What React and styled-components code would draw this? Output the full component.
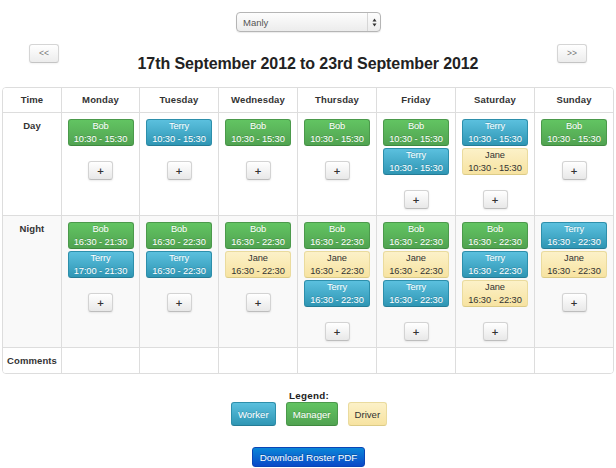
import React from "react";
import styled, { createGlobalStyle, css } from "styled-components";

const Global = createGlobalStyle`
  html, body { margin: 0; padding: 0; background: #fff; }
  body { font-family: "Liberation Sans", Arial, Helvetica, sans-serif; color: #333; }
  * { box-sizing: border-box; }
`;

const Page = styled.div`
  width: 616px;
  padding: 12px 2px 0;
`;

const SelectRow = styled.div`
  display: flex;
  justify-content: center;
`;

const Select = styled.div`
  width: 145px;
  height: 20px;
  margin-left: 1px;
  border: 1px solid #b5b5b5;
  border-radius: 4px;
  background: linear-gradient(#fdfdfd, #ececec);
  box-shadow: 0 1px 1px rgba(0, 0, 0, 0.08);
  display: flex;
  align-items: center;
  font-size: 9.5px;
  color: #555;
`;

const SelectText = styled.span`
  flex: 1;
  padding-left: 6px;
`;

const SelectArrow = styled.span`
  width: 13px;
  height: 100%;
  border-left: 1px solid #d6d6d6;
  display: flex;
  align-items: center;
  justify-content: center;
`;

const NavRow = styled.div`
  display: flex;
  align-items: flex-start;
  margin-top: 12px;
  padding: 0 27px;
`;

const NavButton = styled.button`
  width: 30px;
  height: 19px;
  padding: 0;
  border: 1px solid #d5d5d5;
  border-bottom-color: #c4c4c4;
  border-radius: 3px;
  background: linear-gradient(#ffffff, #ececec);
  box-shadow: inset 0 1px 0 rgba(255, 255, 255, 0.3), 0 1px 2px rgba(0, 0, 0, 0.05);
  font-family: inherit;
  font-size: 8.5px;
  color: #777;
  line-height: 17px;
`;

const Title = styled.h3`
  flex: 1;
  margin: 10px 0 0;
  text-align: center;
  font-size: 16px;
  line-height: 20px;
  font-weight: bold;
  color: #222;
  letter-spacing: -0.1px;
`;

const Grid = styled.div`
  margin-top: 13px;
  display: grid;
  grid-template-columns: 58px 78px 79px 79px 79px 79px 79px 79px;
  border: 1px solid #dddddd;
  border-radius: 4px;
  overflow: hidden;
`;

const Cell = styled.div`
  border-left: ${(p) => (p.$first ? "0" : "1px solid #dddddd")};
  border-top: ${(p) => (p.$top ? "0" : "1px solid #dddddd")};
  background: ${(p) => (p.$shade ? "#f9f9f9" : "#fff")};
  padding: ${(p) => (p.$head ? "5px 2px 6px" : "6px 2px 6px")};
  display: flex;
  flex-direction: column;
  align-items: center;
  font-size: 9px;
  line-height: 13px;
`;

const HeadText = styled.span`
  font-weight: bold;
  font-size: 9.5px;
  letter-spacing: 0.15px;
  color: #333;
`;

const LabelText = styled.span`
  font-weight: bold;
  font-size: 9.5px;
  letter-spacing: 0.1px;
  color: #333;
`;

const colors = {
  manager: css`
    background: linear-gradient(#62c462, #51a351);
    border-color: #4b994b #4b994b #3f8a3f;
    color: #fff;
    text-shadow: 0 -1px 0 rgba(0, 0, 0, 0.15);
  `,
  worker: css`
    background: linear-gradient(#5bc0de, #2f96b4);
    border-color: #2d8fab #2d8fab #257c96;
    color: #fff;
    text-shadow: 0 -1px 0 rgba(0, 0, 0, 0.15);
  `,
  driver: css`
    background: linear-gradient(#fcf1c8, #f7e3a1);
    border-color: #eadb9e #eadb9e #dccb86;
    color: #333;
  `,
};

const Shift = styled.div`
  width: 66px;
  height: 27px;
  border: 1px solid;
  border-radius: 3px;
  display: flex;
  flex-direction: column;
  align-items: center;
  justify-content: center;
  font-size: 9.3px;
  letter-spacing: -0.1px;
  line-height: 12.5px;
  & + & { margin-top: 2px; }
  ${(p) => colors[p.$kind]}
`;

const AddButton = styled.button`
  margin-top: 15px;
  width: 25px;
  height: 19px;
  padding: 0;
  border: 1px solid #d3d3d3;
  border-bottom-color: #bdbdbd;
  border-radius: 3px;
  background: linear-gradient(#ffffff, #e8e8e8);
  box-shadow: 0 1px 2px rgba(0, 0, 0, 0.08);
  font-family: "DejaVu Sans", sans-serif;
  font-size: 9px;
  font-weight: bold;
  color: #333;
  line-height: 16px;
`;

const LegendBox = styled.div`
  margin-top: 15px;
  display: flex;
  flex-direction: column;
  align-items: center;
`;

const LegendTitle = styled.div`
  font-weight: bold;
  font-size: 9.8px;
  line-height: 13px;
  color: #222;
  letter-spacing: 0.3px;
  padding-left: 2px;
`;

const LegendRow = styled.div`
  display: flex;
  gap: 10px;
  margin-left: 2px;
`;

const LegendItem = styled.div`
  height: 24px;
  padding: 0 6px;
  border: 1px solid;
  border-radius: 3px;
  display: flex;
  align-items: center;
  font-size: 9.6px;
  ${(p) => colors[p.$kind]}
`;

const Download = styled.button`
  margin-top: 21px;
  width: 113px;
  height: 20px;
  padding: 0;
  margin-left: 1px;
  border: 1px solid #0a45b5;
  border-radius: 3px;
  background: linear-gradient(#0a86d8, #0a49c8);
  color: #fff;
  font-family: inherit;
  font-size: 9.8px;
  text-shadow: 0 -1px 0 rgba(0, 0, 0, 0.25);
`;

const days = ["Monday", "Tuesday", "Wednesday", "Thursday", "Friday", "Saturday", "Sunday"];

const dayShifts = [
  [["manager", "Bob", "10:30 - 15:30"]],
  [["worker", "Terry", "10:30 - 15:30"]],
  [["manager", "Bob", "10:30 - 15:30"]],
  [["manager", "Bob", "10:30 - 15:30"]],
  [["manager", "Bob", "10:30 - 15:30"], ["worker", "Terry", "10:30 - 15:30"]],
  [["worker", "Terry", "10:30 - 15:30"], ["driver", "Jane", "10:30 - 15:30"]],
  [["manager", "Bob", "10:30 - 15:30"]],
];

const nightShifts = [
  [["manager", "Bob", "16:30 - 21:30"], ["worker", "Terry", "17:00 - 21:30"]],
  [["manager", "Bob", "16:30 - 22:30"], ["worker", "Terry", "16:30 - 22:30"]],
  [["manager", "Bob", "16:30 - 22:30"], ["driver", "Jane", "16:30 - 22:30"]],
  [["manager", "Bob", "16:30 - 22:30"], ["driver", "Jane", "16:30 - 22:30"], ["worker", "Terry", "16:30 - 22:30"]],
  [["manager", "Bob", "16:30 - 22:30"], ["driver", "Jane", "16:30 - 22:30"], ["worker", "Terry", "16:30 - 22:30"]],
  [["manager", "Bob", "16:30 - 22:30"], ["worker", "Terry", "16:30 - 22:30"], ["driver", "Jane", "16:30 - 22:30"]],
  [["worker", "Terry", "16:30 - 22:30"], ["driver", "Jane", "16:30 - 22:30"]],
];

function ShiftCell({ shifts, shade }) {
  return (
    <Cell $shade={shade}>
      {shifts.map(([kind, name, time], i) => (
        <Shift key={i} $kind={kind}>
          <span>{name}</span>
          <span>{time}</span>
        </Shift>
      ))}
      <AddButton>+</AddButton>
    </Cell>
  );
}

export default function App() {
  return (
    <>
      <Global />
      <Page>
        <SelectRow>
          <Select>
            <SelectText>Manly</SelectText>
            <SelectArrow>
              <svg width="5" height="9" viewBox="0 0 5 9">
                <path d="M2.5 0.5 L4.5 3.5 L0.5 3.5 Z" fill="#333" />
                <path d="M2.5 8.5 L4.5 5.5 L0.5 5.5 Z" fill="#333" />
              </svg>
            </SelectArrow>
          </Select>
        </SelectRow>

        <NavRow>
          <NavButton>&lt;&lt;</NavButton>
          <Title>17th September 2012 to 23rd September 2012</Title>
          <NavButton>&gt;&gt;</NavButton>
        </NavRow>

        <Grid>
          <Cell $first $top $head>
            <HeadText>Time</HeadText>
          </Cell>
          {days.map((d) => (
            <Cell key={d} $top $head>
              <HeadText>{d}</HeadText>
            </Cell>
          ))}

          <Cell $first>
            <LabelText>Day</LabelText>
          </Cell>
          {dayShifts.map((s, i) => (
            <ShiftCell key={i} shifts={s} />
          ))}

          <Cell $first $shade>
            <LabelText>Night</LabelText>
          </Cell>
          {nightShifts.map((s, i) => (
            <ShiftCell key={i} shifts={s} shade />
          ))}

          <Cell $first>
            <LabelText>Comments</LabelText>
          </Cell>
          {days.map((d) => (
            <Cell key={d} />
          ))}
        </Grid>

        <LegendBox>
          <LegendTitle>Legend:</LegendTitle>
          <LegendRow>
            <LegendItem $kind="worker">Worker</LegendItem>
            <LegendItem $kind="manager">Manager</LegendItem>
            <LegendItem $kind="driver">Driver</LegendItem>
          </LegendRow>
          <Download>Download Roster PDF</Download>
        </LegendBox>
      </Page>
    </>
  );
}
